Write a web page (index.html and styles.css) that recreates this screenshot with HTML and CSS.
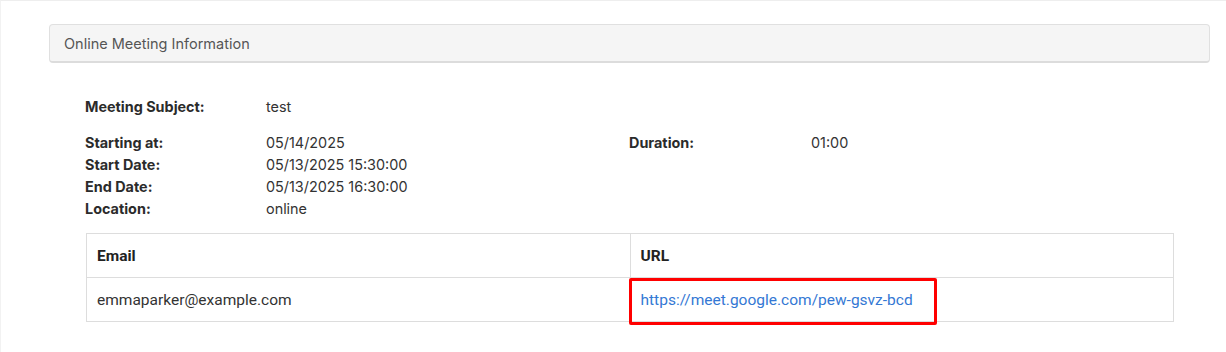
FILE: index.html
```html
<!DOCTYPE html>
<html lang="en">
<head>
  <meta charset="UTF-8" />
  <meta name="viewport" content="width=device-width, initial-scale=1.0" />
  <title>Online Meeting Information</title>
  <link rel="stylesheet" href="styles.css">
</head>
<body>
  <div class="page">
    <div class="panel-heading">Online Meeting Information</div>

    <section class="meeting">
      <div class="info-grid">
        <div class="info-row first">
          <span class="label">Meeting Subject:</span>
          <span class="value">test</span>
        </div>
        <div class="info-row">
          <span class="label">Starting at:</span>
          <span class="value">05/14/2025</span>
          <span class="label">Duration:</span>
          <span class="value">01:00</span>
        </div>
        <div class="info-row">
          <span class="label">Start Date:</span>
          <span class="value">05/13/2025 15:30:00</span>
        </div>
        <div class="info-row">
          <span class="label">End Date:</span>
          <span class="value">05/13/2025 16:30:00</span>
        </div>
        <div class="info-row">
          <span class="label">Location:</span>
          <span class="value">online</span>
        </div>
      </div>

      <table class="attendees">
        <thead>
          <tr>
            <th>Email</th>
            <th>URL</th>
          </tr>
        </thead>
        <tbody>
          <tr>
            <td>emmaparker@example.com</td>
            <td class="url-cell">
              <a href="#">https://meet.google.com/pew-gsvz-bcd</a>
              <span class="highlight"></span>
            </td>
          </tr>
        </tbody>
      </table>
    </section>
  </div>
</body>
</html>
```

FILE: styles.css
```css
* { margin: 0; padding: 0; box-sizing: border-box; }
html, body { height: 100%; }
body {
  font-family: 'Inter', 'Liberation Sans', sans-serif;
  font-size: 14.4px;
  color: #333;
  background: #fff;
}

/* Outer page frame */
.page {
  min-height: 100%;
  border-top: 1px solid #eee;
  border-left: 1px solid #f2f2f2;
  padding: 23px 16px 0 48px;
}

/* Panel header bar */
.panel-heading {
  height: 39px;
  line-height: 37px;
  padding: 0 14px;
  background: #f5f5f5;
  border: 1px solid #e0e0e0;
  border-bottom: 2px solid #dcdcdc;
  border-radius: 4px;
  color: #555;
  font-size: 14.5px;
}

/* Meeting details */
.meeting { padding: 33px 37px 0 36px; }

.info-grid { display: flex; flex-direction: column; }
.info-row {
  display: grid;
  grid-template-columns: 181px 363px 182px 1fr;
  line-height: 22px;
}
.info-row.first { margin-bottom: 14px; }
.label { font-weight: 700; color: #2b2b2b; }
.value { color: #333; }

/* Attendee table */
.attendees {
  width: 100%;
  margin: 13px 0 0 1px;
  border-collapse: collapse;
  table-layout: fixed;
  font-family: 'Roboto', 'Liberation Sans', sans-serif;
  font-size: 15.5px;
  color: #333;
}
.attendees th,
.attendees td {
  border: 1px solid #ddd;
  height: 44px;
  padding: 0 10px;
  text-align: left;
  vertical-align: middle;
}
.attendees th { font-weight: 700; color: #222; }
.attendees a { color: #3478d4; text-decoration: none; }

.url-cell { position: relative; }
.highlight {
  position: absolute;
  top: 0;
  left: -2px;
  width: 308px;
  height: 47px;
  border: 3px solid #ff0000;
  border-radius: 2px;
  pointer-events: none;
}
```
